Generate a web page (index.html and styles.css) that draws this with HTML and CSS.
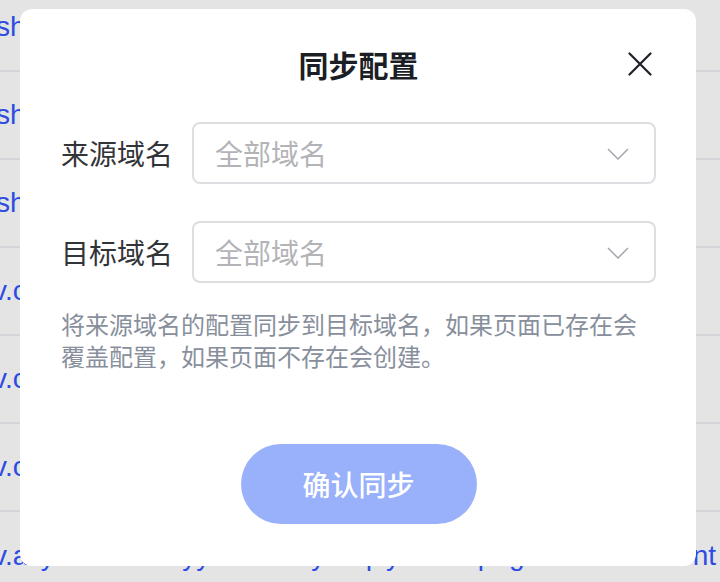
FILE: index.html
```html
<!DOCTYPE html>
<html lang="zh-CN">
<head>
<meta charset="utf-8">
<title>同步配置</title>
<link rel="stylesheet" href="styles.css">
</head>
<body>
<div class="page">
  <div class="row"><span class="link cut-s">sh</span></div>
  <div class="row"><span class="link cut-s">sh</span></div>
  <div class="row"><span class="link cut-s">sh</span></div>
  <div class="row"><span class="link cut-v">v.cn</span></div>
  <div class="row"><span class="link cut-v">v.cn</span></div>
  <div class="row"><span class="link cut-v">v.cn</span></div>
  <div class="row last"><span class="link cut-v">v.aliyuncs.com/yy</span><span class="link tail">/a/yunqi/y/homepage/event/content</span></div>
</div>

<div class="dialog">
  <h2 class="title">同步配置</h2>
  <button class="close" aria-label="关闭">
    <svg width="24" height="24" viewBox="0 0 24 24"><path d="M1.5 1.5 L22.5 22.5 M22.5 1.5 L1.5 22.5" stroke="#1d2027" stroke-width="2.2" stroke-linecap="round" fill="none"/></svg>
  </button>
  <div class="form">
    <div class="field">
      <span class="label">来源域名</span>
      <div class="select">
        <span class="placeholder">全部域名</span>
        <svg class="chevron" width="22" height="12" viewBox="0 0 22 12"><polyline points="1,1 11,11 21,1" fill="none" stroke="#a7a7ad" stroke-width="1.5"/></svg>
      </div>
    </div>
    <div class="field">
      <span class="label">目标域名</span>
      <div class="select">
        <span class="placeholder">全部域名</span>
        <svg class="chevron" width="22" height="12" viewBox="0 0 22 12"><polyline points="1,1 11,11 21,1" fill="none" stroke="#a7a7ad" stroke-width="1.5"/></svg>
      </div>
    </div>
  </div>
  <p class="desc">将来源域名的配置同步到目标域名，如果页面已存在会覆盖配置，如果页面不存在会创建。</p>
  <div class="actions">
    <button class="confirm">确认同步</button>
  </div>
</div>
</body>
</html>
```
FILE: styles.css
```css
* { box-sizing: border-box; }

html, body {
  margin: 0;
  padding: 0;
  width: 720px;
  height: 582px;
  overflow: hidden;
  background: #e4e4e5;
}

.page {
  margin-top: -16px;
  font-family: "Liberation Sans", Arial, sans-serif;
}

.row {
  height: 88px;
  border-bottom: 2px solid #d5d5d9;
  display: flex;
  align-items: center;
  justify-content: space-between;
  overflow: hidden;
  white-space: nowrap;
}

.row.last { border-bottom: none; }

.link {
  font-size: 28px;
  color: #2c4ce2;
}

.cut-s { margin-left: -4px; }
.cut-v { margin-left: -7px; }
.tail { margin-right: 4px; }

.dialog {
  position: absolute;
  left: 20px;
  top: 9px;
  width: 676px;
  background: #fff;
  border-radius: 12px;
  padding: 35px 40px 42px 41px;
  font-family: "Noto Sans CJK SC", "Noto Sans", sans-serif;
}

.title {
  margin: 0;
  text-align: center;
  font-size: 30px;
  line-height: 40px;
  font-weight: 600;
  color: #1b1e25;
}

.close {
  position: absolute;
  top: 43px;
  right: 44px;
  width: 24px;
  height: 24px;
  padding: 0;
  border: 0;
  background: none;
  display: block;
}
.close svg { display: block; }

.form {
  margin-top: 38px;
  display: flex;
  flex-direction: column;
  gap: 37px;
}

.field {
  display: flex;
  align-items: center;
}

.label {
  width: 131px;
  flex: none;
  font-size: 28px;
  line-height: 40px;
  color: #333438;
}

.select {
  flex: 1;
  height: 62px;
  border: 2px solid #dedee2;
  border-radius: 8px;
  display: flex;
  align-items: center;
  justify-content: space-between;
  padding: 0 25px 0 21px;
}

.placeholder {
  font-size: 28px;
  line-height: 40px;
  color: #b3b3b8;
}

.chevron { display: block; margin-top: 2px; }

.desc {
  margin: 25px 0 0 0;
  font-size: 24px;
  line-height: 32px;
  color: #888f9c;
}

.actions {
  margin-top: 72px;
  display: flex;
  justify-content: center;
}

.confirm {
  width: 236px;
  height: 80px;
  border: 0;
  border-radius: 40px;
  background: #99b0fa;
  color: #fff;
  font-family: "Noto Sans CJK SC", "Noto Sans", sans-serif;
  font-size: 28px;
  font-weight: 500;
  padding: 0;
}
```
